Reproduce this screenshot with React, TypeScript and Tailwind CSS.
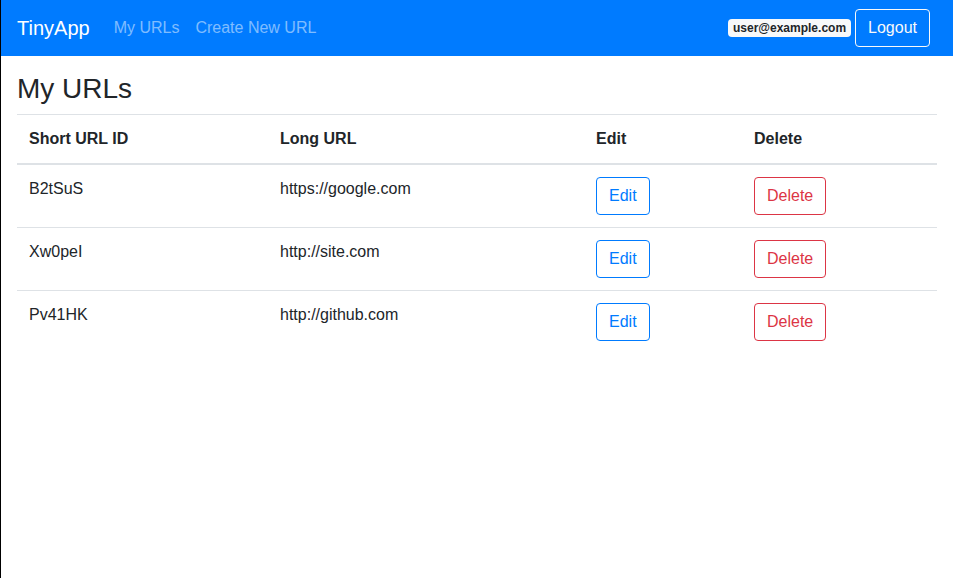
import React from 'react';

interface UrlRow {
  id: string;
  longUrl: string;
}

const urls: UrlRow[] = [
  { id: 'B2tSuS', longUrl: 'https://google.com' },
  { id: 'Xw0peI', longUrl: 'http://site.com' },
  { id: 'Pv41HK', longUrl: 'http://github.com' },
];

const Navbar: React.FC = () => {
  return (
    <nav className="flex items-center h-14 bg-[#007bff] pl-4 pr-[23px]">
      <a className="text-white text-[20px] leading-[30px] mr-4">TinyApp</a>
      <a className="text-white/50 px-2 leading-6">My URLs</a>
      <a className="text-white/50 px-2 leading-6">Create New URL</a>
      <div className="ml-auto flex items-center gap-1">
        <span className="bg-[#f8f9fa] text-[#212529] text-[12px] font-bold leading-none px-[5px] py-[3px] rounded">
          user@example.com
        </span>
        <button className="border border-[#f8f9fa] text-[#f8f9fa] rounded px-3 py-1.5 leading-6">
          Logout
        </button>
      </div>
    </nav>
  );
};

export default function App() {
  return (
    <div
      className="min-h-screen border-l border-black bg-white text-[#212529] text-base"
      style={{ fontFamily: '"Liberation Sans", Arial, sans-serif' }}
    >
      <Navbar />
      <main className="px-4 pt-4">
        <h3 className="text-[28px] font-medium leading-[1.2] mb-2">My URLs</h3>
        <table className="w-full border-collapse">
          <thead>
            <tr className="border-t border-[#dee2e6] border-b-2">
              <th className="w-[251px] text-left font-bold p-3 leading-6">Short URL ID</th>
              <th className="w-[316px] text-left font-bold p-3 leading-6">Long URL</th>
              <th className="w-[158px] text-left font-bold p-3 leading-6">Edit</th>
              <th className="text-left font-bold p-3 leading-6">Delete</th>
            </tr>
          </thead>
          <tbody>
            {urls.map((u, i) => (
              <tr key={u.id} className={i > 0 ? 'border-t border-[#dee2e6]' : ''}>
                <td className="p-3 align-top leading-6">{u.id}</td>
                <td className="p-3 align-top leading-6">{u.longUrl}</td>
                <td className="p-3 align-top">
                  <button className="border border-[#007bff] text-[#007bff] rounded px-3 py-1.5 leading-6">
                    Edit
                  </button>
                </td>
                <td className="p-3 align-top">
                  <button className="border border-[#dc3545] text-[#dc3545] rounded px-3 py-1.5 leading-6">
                    Delete
                  </button>
                </td>
              </tr>
            ))}
          </tbody>
        </table>
      </main>
    </div>
  );
}
